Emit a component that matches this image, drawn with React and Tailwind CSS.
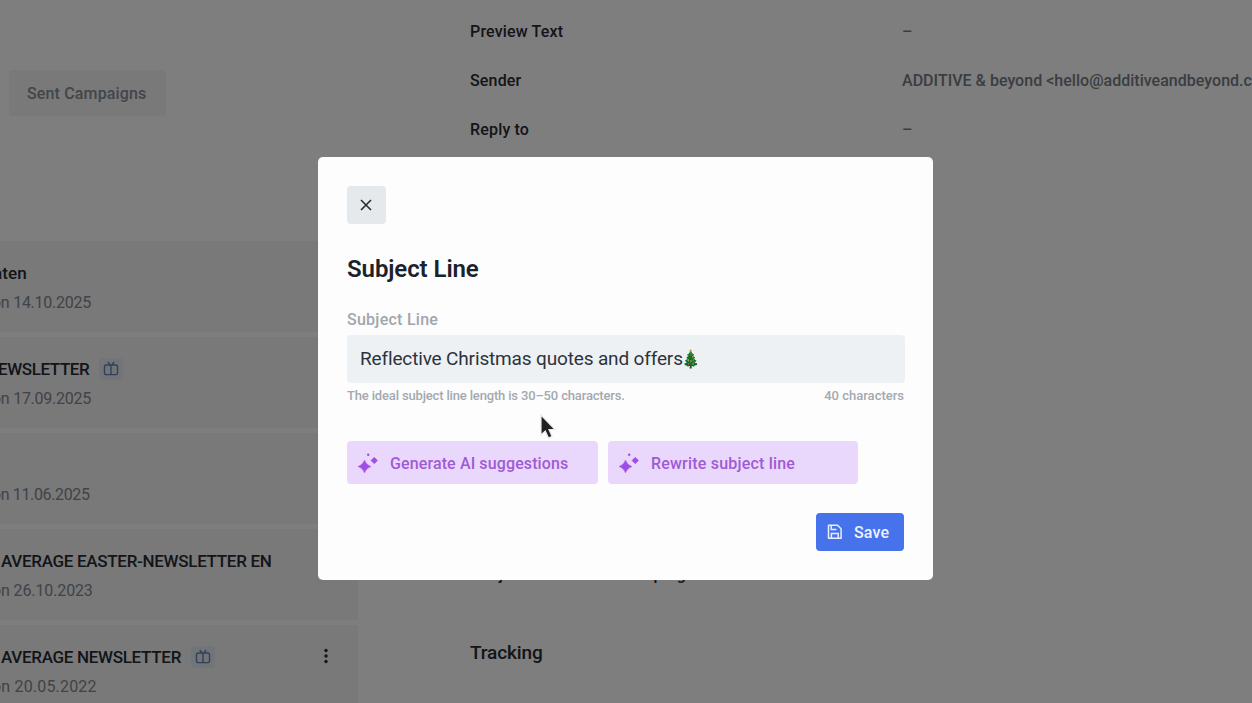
import { useState } from 'react'

const campaigns = [
  { id: 1, title: 'aten', date: 'on 14.10.2025', titleClass: '-ml-[7px] tracking-[0.1px]', dateClass: 'tracking-[-0.26px]' },
  { id: 2, title: 'EWSLETTER', date: 'on 17.09.2025', titleClass: '-ml-[2px] tracking-[-0.4px]', dateClass: 'tracking-[-0.26px]', gift: true },
  { id: 3, title: '', date: 'on 11.06.2025', titleClass: '', dateClass: 'tracking-[-0.36px]' },
  { id: 4, title: 'AVERAGE EASTER-NEWSLETTER EN', date: 'on 26.10.2023', titleClass: 'ml-px tracking-[-0.3px]', dateClass: 'tracking-[-0.12px]' },
  { id: 5, title: 'AVERAGE NEWSLETTER', date: 'on 20.05.2022', titleClass: 'ml-px tracking-[-0.3px]', dateClass: 'tracking-[0.18px]', gift: true, menu: true },
]

const settings = [
  { label: 'Preview Text', value: '–' },
  { label: 'Sender', value: 'ADDITIVE & beyond <hello@additiveandbeyond.com>' },
  { label: 'Reply to', value: '–' },
]

function GiftIcon() {
  return (
    <span className="flex h-[22px] w-6 items-center justify-center rounded bg-[#e2e8f2]">
      <svg width="16" height="16" viewBox="0 0 16 16" fill="none" stroke="#6680ae" strokeWidth="1.4">
        <rect x="1.5" y="4" width="13" height="9.6" rx="1.6" />
        <path d="M8 4v9.6M4.8 1l2.4 3M11.2 1L8.8 4" />
      </svg>
    </span>
  )
}

function SparkIcon() {
  return (
    <svg width="20" height="20" viewBox="0 0 20 20" fill="#a04de6">
      <path d="M6.5 7 Q8 11.8 13 13.5 Q8 15.2 6.5 20 Q5 15.2 0 13.5 Q5 11.8 6.5 7Z" stroke="#a04de6" strokeWidth=".4" />
      <path d="M16.2 4.4 L19.3 7.5 L16.2 10.6 L13.1 7.5Z" stroke="#a04de6" strokeWidth=".9" strokeLinejoin="round" />
      <circle cx="10.2" cy="1.7" r="1.2" />
    </svg>
  )
}

function SaveIcon() {
  return (
    <svg width="16" height="16" viewBox="0 0 16 16" fill="none" stroke="#e9eefc" strokeWidth="1.5">
      <path d="M1.5 1.2h9l3.6 3.6v9.4H1.5z" strokeLinejoin="round" />
      <path d="M4.2 1.2v4.2h5.2M4.4 14.2V9.4h6.8v4.8" />
    </svg>
  )
}

function CampaignList() {
  return (
    <div className="w-[358px] shrink-0 overflow-hidden">
      <div className="mt-[70px] ml-[9px] flex h-[46px] w-[157px] items-center rounded bg-[#f2f2f3] pt-0.5 pl-[18px] text-base font-medium tracking-[0.15px] text-[#848b94]">
        Sent Campaigns
      </div>
      <div className="mt-[125px] flex flex-col gap-[5px]">
        {campaigns.map((item) => (
          <div key={item.id} className="flex h-[91px] shrink-0 justify-between bg-[#f2f2f2] pt-[21px]">
            <div className="whitespace-nowrap">
              <div className={`flex h-6 items-center text-[17px] font-medium text-[#262b33] ${item.titleClass}`}>
                {item.title}
                {item.gift && <span className="-mt-0.5 ml-[10px]"><GiftIcon /></span>}
              </div>
              <div className={`mt-[5px] -ml-2 text-base leading-6 text-[#80878f] ${item.dateClass}`}>{item.date}</div>
            </div>
            {item.menu && (
              <svg className="mt-[2px] mr-6" width="16" height="16" viewBox="0 0 16 16" fill="#262b33">
                <circle cx="8" cy="2.5" r="1.7" />
                <circle cx="8" cy="8" r="1.7" />
                <circle cx="8" cy="13.5" r="1.7" />
              </svg>
            )}
          </div>
        ))}
      </div>
    </div>
  )
}

function CampaignDetails() {
  return (
    <div className="ml-28 flex-1 pt-[7px] text-base text-[#262b33]">
      {settings.map((row) => (
        <div key={row.label} className="flex h-[49px] items-center whitespace-nowrap">
          <div className="w-[432px] shrink-0 font-medium tracking-[0.17px]">{row.label}</div>
          <div className="font-medium tracking-[0.02px] text-[#757b83]">{row.value}</div>
        </div>
      ))}
      <div className="mt-[409px] font-medium leading-6 tracking-[0.5px]">Subject for Resend Campaign</div>
      <div className="mt-[52px] text-[19px] font-medium leading-7 tracking-[-0.1px]">Tracking</div>
    </div>
  )
}

function SubjectDialog() {
  const [subject] = useState('Reflective Christmas quotes and offers')

  return (
    <div className="h-[423px] w-[615px] rounded-[5px] bg-[#fdfdfd] px-[29px] pt-[29px]">
      <button className="flex h-[38px] w-[39px] items-center justify-center rounded bg-[#e5e9ec] pr-0.5">
        <svg width="12" height="12" viewBox="0 0 12 12" stroke="#262c38" strokeWidth="1.6">
          <path d="M1 1l10 10M11 1L1 11" />
        </svg>
      </button>
      <h2 className="mt-[29px] text-2xl font-semibold leading-8 tracking-[-0.08px] text-[#1a222b]">Subject Line</h2>
      <label className="mt-[23px] block text-base font-medium leading-6 tracking-[0.26px] text-[#a0a6ae]">Subject Line</label>
      <div className="mt-[3px] flex h-12 w-[558px] items-center rounded bg-[#eef1f3] px-[13px] text-[19px] tracking-[-0.15px] text-[#2c333e]">
        {subject}
        <span className="scale-y-125 text-[14px] tracking-normal brightness-75">🎄</span>
      </div>
      <div className="mt-[3px] flex justify-between text-[13px] font-medium leading-5 text-[#a3a9b0]">
        <span className="tracking-[-0.16px]">The ideal subject line length is 30–50 characters.</span>
        <span>40 characters</span>
      </div>
      <div className="mt-[35px] flex gap-[10px] text-base font-medium text-[#a05ad6]">
        <button className="flex h-[43px] w-[251px] items-center gap-3 rounded bg-[#e9d8fc] pl-[11px] tracking-[0.12px]">
          <SparkIcon />
          <span className="pt-0.5">Generate AI suggestions</span>
        </button>
        <button className="flex h-[43px] w-[250px] items-center gap-3 rounded bg-[#e9d8fc] pl-[11px] tracking-[0.2px]">
          <SparkIcon />
          <span className="pt-0.5">Rewrite subject line</span>
        </button>
      </div>
      <div className="mt-[29px] flex justify-end">
        <button className="flex h-[38px] w-[88px] items-center gap-[11px] rounded bg-[#4672ec] pl-[11px] text-base font-medium text-[#eef2fd]">
          <SaveIcon />
          <span className="pt-0.5 tracking-[0.15px]">Save</span>
        </button>
      </div>
    </div>
  )
}

export default function App() {
  return (
    <div className="relative h-[703px] w-[1252px] overflow-hidden bg-[#fcfcfc] font-[Roboto,'Noto_Color_Emoji',sans-serif]">
      <div className="flex h-full">
        <CampaignList />
        <CampaignDetails />
      </div>

      {/* Backdrop with the dialog */}
      <div className="absolute inset-0 bg-black/50 pt-[157px] pl-[318px]">
        <SubjectDialog />
      </div>

      {/* Mouse pointer */}
      <svg className="absolute top-[412px] left-[538px]" width="20" height="28" viewBox="0 0 20 28">
        <path d="M3 3v20l4.3-4 3.2 7 3.6-1.6-3.1-6.9H17z" fill="#1e2022" stroke="#e8eaeb" strokeWidth="1.2" />
      </svg>
    </div>
  )
}
